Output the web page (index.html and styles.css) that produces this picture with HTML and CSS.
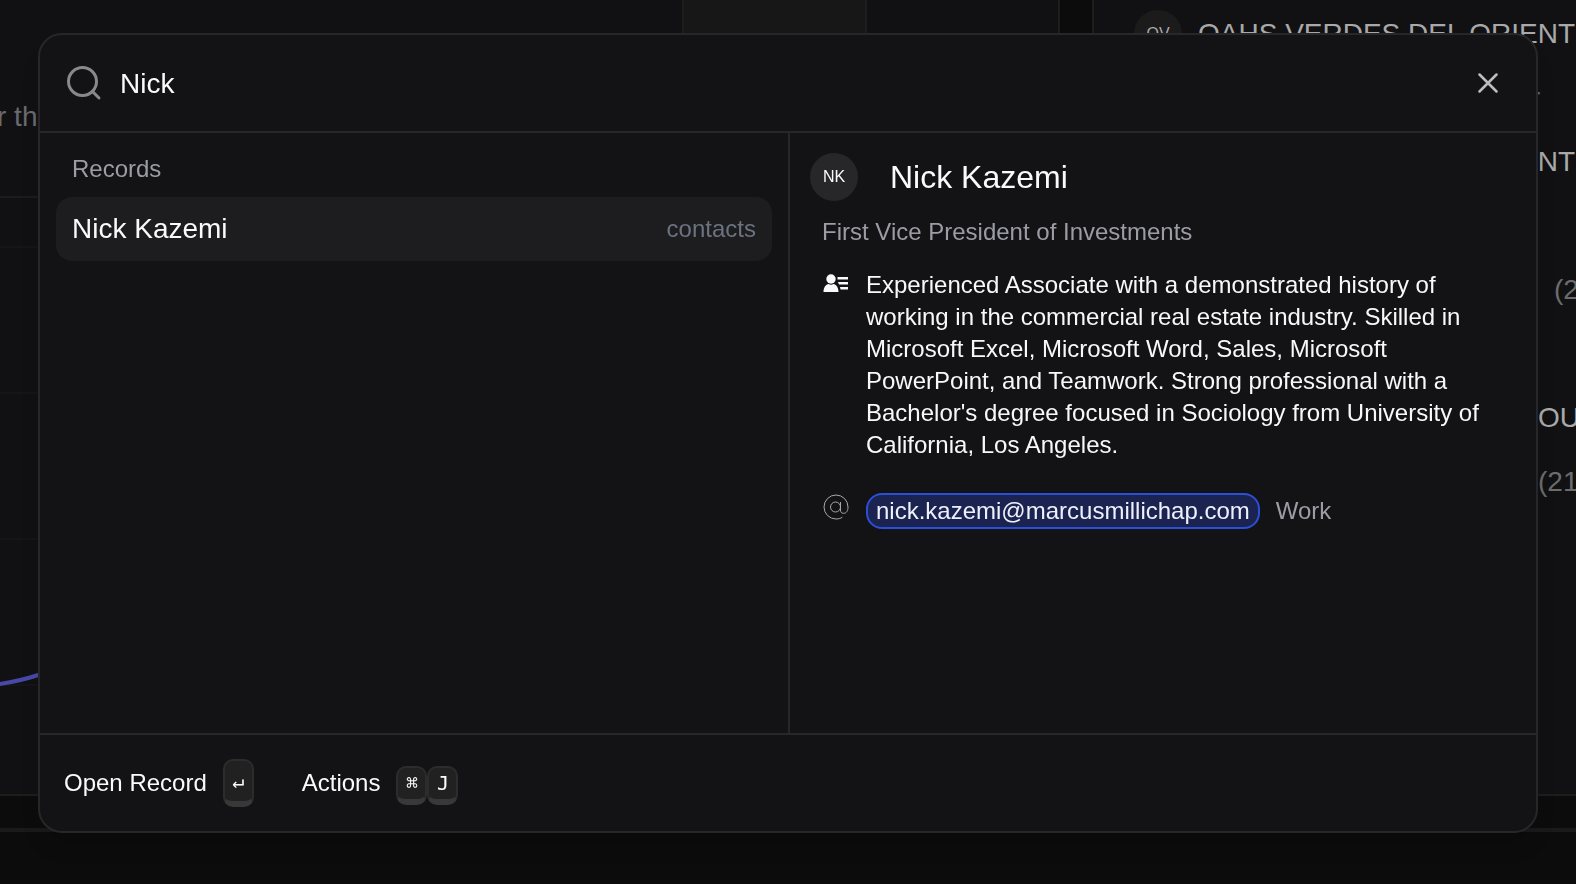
FILE: index.html
```html
<!DOCTYPE html>
<html lang="en">
<head>
<meta charset="utf-8">
<title>Search</title>
<link rel="stylesheet" href="styles.css">
</head>
<body>
<div class="app">
  <main class="workspace">
    <section class="card chart-card">
      <div class="tabs"><span class="tab"></span></div>
      <p class="chart-caption">r th</p>
      <div class="chart">
        <div class="grid-line"></div>
        <div class="grid-line"></div>
        <div class="grid-line"></div>
        <div class="grid-line"></div>
        <svg class="trend" viewBox="0 0 80 30" aria-hidden="true"><path d="M-4 16.500C12 14.500 26 11 40 6.500S66 0 80-4"/></svg>
      </div>
    </section>
    <section class="card list-card">
      <div class="row"><span class="row-avatar">OV</span><span>OAHS VERDES DEL ORIENT</span></div>
      <div class="row inset muted"><span class="lead">r</span></div>
      <div class="row inset"><span>OAHS VERDES DEL ORIENT</span></div>
      <div class="row"></div>
      <div class="row far muted">(2</div>
      <div class="row"></div>
      <div class="row near">OU</div>
      <div class="row near muted">(21</div>
    </section>
  </main>
  <footer class="app-footer"></footer>
</div>

<div class="overlay">
  <div class="dialog" role="dialog" aria-modal="true" aria-label="Search records">
    <header class="search-bar">
      <label for="query" class="search-icon" aria-label="Search">
        <svg viewBox="0 0 36 36" aria-hidden="true"><circle cx="16.500" cy="16.500" r="14"/><path d="M26.500 26.500l6.500 6.500"/></svg>
      </label>
      <input id="query" class="search-input" type="text" value="Nick" autocomplete="off">
      <button class="close" type="button" aria-label="Close">
        <svg viewBox="0 0 20 20" aria-hidden="true"><path d="M1.500 1.500l17 17M18.500 1.500l-17 17"/></svg>
      </button>
    </header>
    <div class="panes">
      <section class="results">
        <h2 class="group-label">Records</h2>
        <button class="result" type="button"><span>Nick Kazemi</span><span class="kind">contacts</span></button>
      </section>
      <section class="preview">
        <div class="person">
          <span class="avatar">NK</span>
          <h1 class="name">Nick Kazemi</h1>
        </div>
        <p class="job">First Vice President of Investments</p>
        <div class="detail">
          <svg class="bio-icon" viewBox="0 0 28 20" aria-hidden="true"><circle cx="9" cy="6" r="4.700"/><path d="M1.500 19c0-5 2.500-7.500 5-8q2.500 1.500 5 0c2.500.500 5 3 5 8zM15.500 4h10.500v2.500H15.500zM16 9h10v2.500h-9zM18 14h8v2.500h-7.500z"/></svg>
          <p class="bio">Experienced Associate with a demonstrated history of working in the commercial real estate industry. Skilled in Microsoft Excel, Microsoft Word, Sales, Microsoft PowerPoint, and Teamwork. Strong professional with a Bachelor's degree focused in Sociology from University of California, Los Angeles.</p>
        </div>
        <div class="detail contact">
          <svg class="at-icon" viewBox="0 0 28 26" aria-hidden="true"><circle cx="13.500" cy="13" r="5"/><path d="M18.500 8v8c0 2.200 1 3.300 3 3.300 3 0 4.500-2.600 4.500-6.300A12 12 0 1 0 14 25c2.500 0 4.500-.600 6.300-1.700"/></svg>
          <a class="email" href="mailto:nick.kazemi@marcusmillichap.com">nick.kazemi@marcusmillichap.com</a>
          <span class="email-type">Work</span>
        </div>
      </section>
    </div>
    <footer class="actions">
      <button class="action" type="button"><span>Open Record</span><kbd class="key tall">↵</kbd></button>
      <button class="action" type="button"><span>Actions</span><span class="keys"><kbd class="key">⌘</kbd><kbd class="key">J</kbd></span></button>
    </footer>
  </div>
</div>
</body>
</html>
```

FILE: styles.css
```css
* { box-sizing: border-box; }
body {
  margin: 0;
  background: #0c0c0d;
  color: #fafafa;
  font-family: "Liberation Sans", Arial, sans-serif;
  font-size: 24px;
  line-height: 32px;
  overflow: hidden;
}
h1, h2, p { margin: 0; font-weight: 400; }
button, input { font: inherit; color: inherit; background: none; border: 0; padding: 0; }

/* Page behind the dialog */
.app { display: flex; flex-direction: column; height: 100vh; overflow: hidden; }
.workspace {
  flex: 1;
  min-height: 0;
  display: grid;
  grid-template-columns: minmax(0, 1060fr) minmax(0, 484fr);
  gap: 32px;
  padding-bottom: 32px;
  border-bottom: 4px solid #1a1a1b;
}
.app-footer { height: 52px; }
.card { background: #111113; border: 0 solid #1d1d1e; border-bottom-width: 2px; overflow: hidden; }
.chart-card { border-right-width: 2px; display: flex; flex-direction: column; }
.list-card { border-left-width: 2px; padding: 2px 0 0 40px; }
.tabs { display: flex; justify-content: flex-end; height: 84px; padding-right: 191px; }
.tab { width: 185px; background: #171717; border: 0 solid #1d1d1d; border-width: 0 2px; }
.chart-caption { height: 114px; padding-top: 17px; text-indent: -3px; font-size: 28px; color: #6a6a70; border-bottom: 2px solid #1c1c1d; }
.chart { position: relative; flex: 1; padding-top: 48px; display: flex; flex-direction: column; gap: 144px; }
.grid-line { border-top: 2px solid #151517; }
.trend { position: absolute; left: 0; top: 470px; width: 80px; height: 30px; fill: none; stroke: #4848a8; stroke-width: 4; }
.row { display: flex; align-items: center; height: 64px; font-size: 28px; white-space: nowrap; color: #a9a9a9; }
.row-avatar { flex: none; width: 48px; height: 48px; margin-right: 16px; border-radius: 50%; background: #1b1b1c; font-size: 16px; line-height: 48px; text-align: center; }
.inset { padding-left: 64px; }
.muted { color: #6c6c6c; }
.lead { width: 342px; text-align: right; }
.near { padding-left: 404px; }
.far { padding-left: 420px; }

/* Dialog */
.overlay { position: fixed; inset: 0; display: flex; padding: 33px 38px 51px; }
.dialog {
  flex: 1;
  min-width: 0;
  display: flex;
  flex-direction: column;
  background: #131315;
  border: 2px solid #27272a;
  border-radius: 24px;
  overflow: hidden;
  box-shadow: 0 16px 24px -8px rgba(0, 0, 0, .2);
}
.search-bar { display: flex; align-items: center; height: 98px; padding: 0 36px 0 26px; border-bottom: 2px solid #272727; }
.search-icon, .search-icon svg { display: block; width: 36px; height: 36px; }
.search-icon svg { fill: none; stroke: #898989; stroke-width: 3; stroke-linecap: round; }
.search-input { flex: 1; min-width: 0; margin-left: 18px; padding-top: 2px; font-size: 28px; outline: 0; }
.close { display: flex; padding: 2px; }
.close svg { width: 20px; height: 20px; fill: none; stroke: #bdbdbd; stroke-width: 2.5; stroke-linecap: round; }
.panes { flex: 1; min-height: 0; display: grid; grid-template-columns: 1fr 1fr; }
.results { padding: 20px 16px; }
.group-label { padding: 0 16px; font-size: 24px; color: #9c9ca5; }
.result {
  display: flex;
  align-items: center;
  justify-content: space-between;
  width: 100%;
  height: 64px;
  margin-top: 12px;
  padding: 0 16px;
  border-radius: 16px;
  background: #1d1d1f;
  font-size: 28px;
}
.kind { font-size: 24px; color: #6b7280; }
.preview { padding: 20px 24px 20px 20px; border-left: 2px solid #27272a; }
.person { display: flex; align-items: center; gap: 32px; }
.avatar { width: 48px; height: 48px; border-radius: 50%; background: #27272a; font-size: 16px; line-height: 48px; text-align: center; }
.name { font-size: 32px; line-height: 48px; }
.job { margin: 15px 0 0 12px; color: #9c9ca5; }
.detail { display: flex; margin: 21px 28px 0 12px; }
.bio-icon { flex: none; width: 28px; height: 20px; margin: 4px 16px 0 0; fill: #fafafa; }
.bio { flex: 1; color: #f8f8f9; }
.contact { margin-top: 32px; align-items: center; }
.at-icon { flex: none; width: 28px; height: 26px; margin: 0 16px 8px 0; fill: none; stroke: #a8a8a8; stroke-width: 1; }
.email { padding: 0 8px; border: 2px solid #2b4fd6; border-radius: 16px; background: #1b2350; color: #eef0fa; text-decoration: none; }
.email-type { margin-left: 16px; color: #9c9ca5; }
.actions { display: flex; gap: 48px; height: 98px; padding: 0 24px; border-top: 2px solid #272727; }
.action { display: flex; align-items: center; gap: 16px; }
.keys { display: flex; padding-top: 4px; }
.key {
  display: grid;
  place-items: center;
  min-width: 31px;
  height: 39px;
  border: 2px solid #2c2c2c;
  border-bottom: 6px solid #383838;
  border-radius: 10px;
  background: #212121;
  font: 20px/24px "DejaVu Sans Mono", monospace;
}
.tall { height: 48px; }
```
